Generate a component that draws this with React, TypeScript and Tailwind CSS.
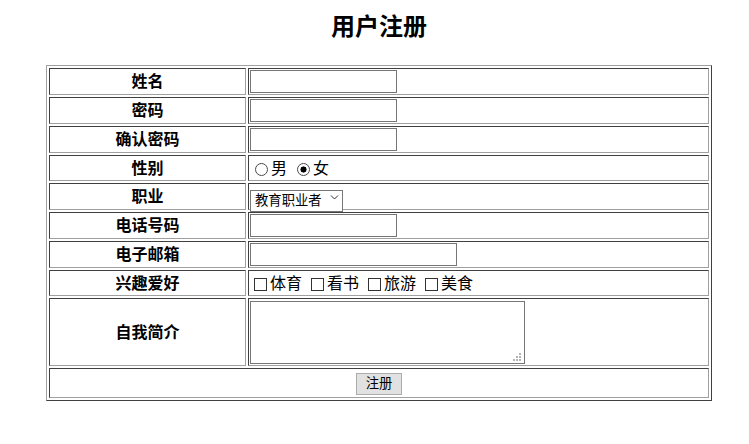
import { ReactNode } from "react";

const cellBase =
  "border border-t-[#404040] border-l-[#404040] border-r-[#a0a0a0] border-b-[#a0a0a0]";

function Label({ children }: { children: ReactNode }) {
  return (
    <div className={`${cellBase} flex items-center justify-center pb-[3px] font-bold text-[16px]`}>
      {children}
    </div>
  );
}

function Field({ children }: { children: ReactNode }) {
  return <div className={`${cellBase} flex items-center p-[1px]`}>{children}</div>;
}

function TextInput({ type = "text", wide = false }: { type?: string; wide?: boolean }) {
  return (
    <input
      type={type}
      className={`${wide ? "w-[207px]" : "w-[147px]"} h-[23px] border border-[#767676] bg-white px-[2px] text-[13.33px] outline-none`}
    />
  );
}

function Radio({ label, checked = false }: { label: string; checked?: boolean }) {
  return (
    <label className="flex items-center">
      <input
        type="radio"
        name="gender"
        defaultChecked={checked}
        className="appearance-none ml-[5px] mr-[3px] mt-[2px] w-[13px] h-[13px] rounded-full border border-[#4a4a4a] bg-white checked:bg-[radial-gradient(circle,#000_0,#000_2.8px,transparent_3.3px)]"
      />
      <span className="mb-[3px] text-[16px]">{label}</span>
    </label>
  );
}

function Check({ label }: { label: string }) {
  return (
    <label className="flex items-center">
      <input
        type="checkbox"
        className="appearance-none ml-[4px] mr-[3px] mt-[2px] w-[13px] h-[13px] border border-[#333] bg-white checked:bg-[#333]"
      />
      <span className="mb-[3px] text-[16px]">{label}</span>
    </label>
  );
}

export default function App() {
  return (
    <div className="min-h-screen bg-white text-black font-['Noto_Sans_CJK_SC','Noto_Sans',sans-serif]">
      <div className="ml-[46px] w-[666px]">
        <h2 className="pt-[10px] text-center text-[24px] font-bold leading-[30px]">用户注册</h2>

        {/* form table: outset frame, inset cells, 2px spacing */}
        <form
          onSubmit={(e) => e.preventDefault()}
          className="mt-[25px] grid grid-cols-[197px_1fr] grid-rows-[27px_27px_27px_26px_27px_27px_27px_26px_68px_30px] gap-[2px] p-[2px] border border-t-[#a0a0a0] border-l-[#a0a0a0] border-r-[#404040] border-b-[#404040]"
        >
          <Label>姓名</Label>
          <Field>
            <TextInput />
          </Field>

          <Label>密码</Label>
          <Field>
            <TextInput type="password" />
          </Field>

          <Label>确认密码</Label>
          <Field>
            <TextInput type="password" />
          </Field>

          <Label>性别</Label>
          <Field>
            <div className="flex items-center gap-[5px]">
              <Radio label="男" />
              <Radio label="女" checked />
            </div>
          </Field>

          <Label>职业</Label>
          <Field>
            <div className="relative w-[93px] h-[22px]">
              <select className="appearance-none w-full h-full border border-[#767676] bg-white pl-[4px] pr-[16px] text-[13.33px] leading-[18px] pb-[2px] outline-none">
                <option>教育职业者</option>
                <option>学生</option>
                <option>工程师</option>
                <option>其他</option>
              </select>
              <svg
                className="pointer-events-none absolute right-[4px] top-[8px]"
                width="9"
                height="6"
                viewBox="0 0 9 6"
                fill="none"
              >
                <path d="M1 1.5L4.5 5L8 1.5" stroke="#333" strokeWidth="1" />
              </svg>
            </div>
          </Field>

          <Label>电话号码</Label>
          <Field>
            <TextInput type="tel" />
          </Field>

          <Label>电子邮箱</Label>
          <Field>
            <TextInput type="email" wide />
          </Field>

          <Label>兴趣爱好</Label>
          <Field>
            <div className="flex items-center gap-[5px]">
              <Check label="体育" />
              <Check label="看书" />
              <Check label="旅游" />
              <Check label="美食" />
            </div>
          </Field>

          <Label>自我简介</Label>
          <Field>
            <div className="relative w-[275px] h-[63px]">
              <textarea className="w-full h-full resize-none border border-[#767676] bg-white p-[2px] text-[13.33px] outline-none" />
              {/* resize grip */}
              <svg
                className="pointer-events-none absolute right-[4px] bottom-[3px]"
                width="8"
                height="8"
                viewBox="0 0 8 8"
              >
                <rect x="6" y="0" width="2" height="2" fill="#b4b4b4" />
                <rect x="3" y="3" width="2" height="2" fill="#b4b4b4" />
                <rect x="6" y="3" width="2" height="2" fill="#b4b4b4" />
                <rect x="0" y="6" width="2" height="2" fill="#b4b4b4" />
                <rect x="3" y="6" width="2" height="2" fill="#b4b4b4" />
                <rect x="6" y="6" width="2" height="2" fill="#b4b4b4" />
              </svg>
            </div>
          </Field>

          <div className={`${cellBase} col-span-2 flex items-center justify-center`}>
            <button
              type="submit"
              className="w-[46px] h-[22px] mt-[2px] border border-[#adadad] bg-[#e1e1e1] pb-[2px] text-[13.33px] leading-[18px]"
            >
              注册
            </button>
          </div>
        </form>
      </div>
    </div>
  );
}
